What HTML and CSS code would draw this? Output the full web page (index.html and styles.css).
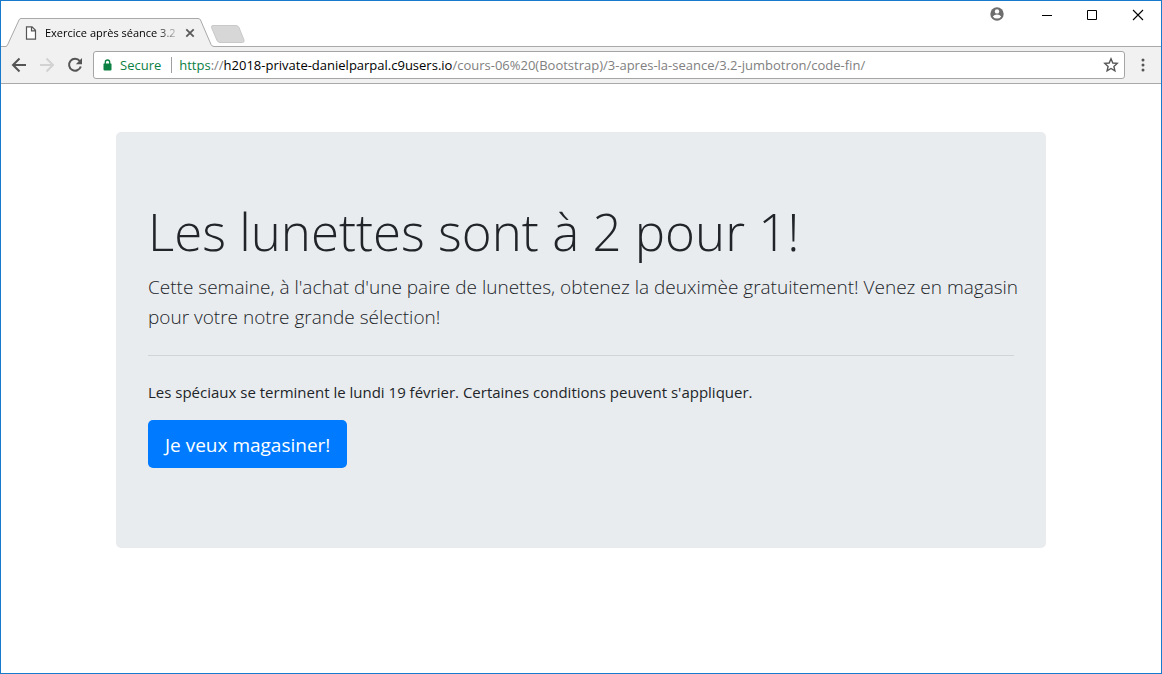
FILE: index.html
```html
<!DOCTYPE html>
<html lang="fr">
<head>
<meta charset="utf-8">
<meta name="viewport" content="width=device-width, initial-scale=1">
<title>Exercice après séance 3.2</title>
<link rel="stylesheet" href="styles.css">
</head>
<body>
<div class="window">
  <header class="titlebar">
    <div class="tabs">
      <div class="tab">
        <svg class="tab-shape" viewBox="0 0 208 29" width="208" height="29" aria-hidden="true"><path d="M0 28.500 Q1 28 1.500 27 L13 2 Q13.500 .5 15 .5 H192 Q194 .5 194.500 2 L205 26.500 Q206 28.500 208 28.500 V29 H0Z" fill="#f1f1f1"/><path d="M0 28.500 Q1 28 1.500 27 L13 2 Q13.500 .5 15 .5 H192 Q194 .5 194.500 2 L205 26.500 Q206 28.500 208 28.500" fill="none" stroke="#a9a9a9"/></svg>
        <svg class="tab-icon" viewBox="0 0 12 14" width="12" height="14" aria-hidden="true"><path d="M1.500 .8H7L10.500 4.300V13.200H1.500ZM6.500 1V4.800H10.300" fill="#fff" stroke="#555" stroke-width="1.200"/></svg>
        <span class="tab-title">Exercice après séance 3.2</span>
        <button class="tab-close" aria-label="Fermer l'onglet"><svg viewBox="0 0 10 10" width="10" height="10"><path d="M1.300 1.300L8.700 8.700M8.700 1.300L1.300 8.700" stroke="#5a5a5a" stroke-width="1.800"/></svg></button>
      </div>
      <button class="new-tab" aria-label="Nouvel onglet"><svg viewBox="0 0 36 18" width="36" height="18"><path d="M3 .5H26Q28 .5 29 2.500L34 15Q34.500 17.500 32.500 17.500H10Q8 17.500 7 15.500L1.500 2.500Q1 .5 3 .5Z" fill="#d7d7d7" stroke="#c9c9c9"/></svg></button>
    </div>
    <div class="controls">
      <button class="control profile" aria-label="Profil"><svg viewBox="0 0 14 14" width="14" height="14"><circle cx="7" cy="7" r="6.700" fill="#6e6e6e"/><circle cx="7" cy="4.400" r="2.200" fill="#fff"/><path d="M2.800 9.400Q4.400 7.600 7 7.600T11.200 9.400Q9.600 11.600 7 11.600T2.800 9.400Z" fill="#fff"/></svg></button>
      <button class="control" aria-label="Réduire"><svg viewBox="0 0 12 12" width="12" height="12"><path d="M2 6.500H12" stroke="#000"/></svg></button>
      <button class="control" aria-label="Agrandir"><svg viewBox="0 0 12 12" width="12" height="12"><path d="M1.500 1.500H10.500V10.500H1.500Z" fill="none" stroke="#000"/></svg></button>
      <button class="control" aria-label="Fermer"><svg viewBox="0 0 12 12" width="12" height="12"><path d="M1 1L11 11M11 1L1 11" stroke="#000" stroke-width="1.100"/></svg></button>
    </div>
  </header>
  <nav class="toolbar" aria-label="Navigation">
    <button class="tool" aria-label="Précédent"><svg viewBox="0 0 16 16" width="16" height="16"><path d="M15 8H2.500M8.500 1.500L2 8L8.500 14.500" fill="none" stroke="#555" stroke-width="2"/></svg></button>
    <button class="tool" aria-label="Suivant" disabled><svg viewBox="0 0 16 16" width="16" height="16"><path d="M1 8H13.500M7.500 1.500L14 8L7.500 14.500" fill="none" stroke="#d2d2d2" stroke-width="2"/></svg></button>
    <button class="tool" aria-label="Actualiser"><svg viewBox="0 0 16 16" width="16" height="16"><path d="M12.800 4A6 6 0 1 0 13.800 9.500" fill="none" stroke="#555" stroke-width="2"/><path d="M15 1V7.200H8.800Z" fill="#555"/></svg></button>
    <div class="omnibox">
      <svg viewBox="0 0 10 12" width="10" height="12" aria-hidden="true"><path d="M1 4.500H8Q8.500 4.500 8.500 5V10.500Q8.500 11.500 7.500 11.500H1.500Q.5 11.500 .5 10.500V5Q.5 4.500 1 4.500Z" fill="#0b8043"/><path d="M2.300 5V3.200Q2.300 1 4.500 1T6.700 3.200V5" fill="none" stroke="#0b8043" stroke-width="1.300"/></svg>
      <span class="secure">Secure</span>
      <div class="url" role="textbox" aria-label="Adresse" contenteditable="true" spellcheck="false"><span class="scheme">https</span>://<span class="host">h2018-private-danielparpal.c9users.io</span>/cours-06%20(Bootstrap)/3-apres-la-seance/3.2-jumbotron/code-fin/</div>
      <button class="star" aria-label="Ajouter aux favoris"><svg viewBox="0 0 16 16" width="16" height="16"><path d="M8 1.800L9.800 6L14.200 6.400L10.900 9.400L11.900 13.800L8 11.500L4.100 13.800L5.100 9.400L1.800 6.400L6.200 6Z" fill="none" stroke="#555" stroke-width="1.400"/></svg></button>
    </div>
    <button class="tool menu" aria-label="Menu"><svg viewBox="0 0 4 14" width="4" height="14"><circle cx="2" cy="2" r="1.500" fill="#555"/><circle cx="2" cy="7" r="1.500" fill="#555"/><circle cx="2" cy="12" r="1.500" fill="#555"/></svg></button>
  </nav>
  <main class="page">
    <section class="jumbotron">
      <h1 class="display">Les lunettes sont à 2 pour 1!</h1>
      <p class="lead">Cette semaine, à l'achat d'une paire de lunettes, obtenez la deuximèe gratuitement! Venez en magasin pour votre notre grande sélection!</p>
      <hr class="rule">
      <p class="note">Les spéciaux se terminent le lundi 19 février. Certaines conditions peuvent s'appliquer.</p>
      <p class="action"><a class="btn" href="#">Je veux magasiner!</a></p>
    </section>
  </main>
</div>
</body>
</html>
```

FILE: styles.css
```css
* { box-sizing: border-box; }

body {
  margin: 0;
  background: #fff;
  color: #212529;
  font-family: "Open Sans", "Noto Sans", sans-serif;
  font-size: 15px;
}

button {
  padding: 0;
  border: 0;
  background: none;
  font: inherit;
}

svg { display: block; }

.window {
  min-height: 100vh;
  border: 1px solid #1979ca;
}

.titlebar {
  display: flex;
  justify-content: space-between;
  height: 46px;
  border-bottom: 1px solid #a9a9a9;
}

.tabs {
  display: flex;
  align-items: flex-end;
  padding-left: 5px;
}

.tab {
  position: relative;
  display: flex;
  align-items: center;
  width: 208px;
  height: 29px;
  margin-bottom: -1px;
  padding: 0 19px;
}

.tab-shape {
  position: absolute;
  inset: 0;
}

.tab-icon, .tab-title, .tab-close { position: relative; }

.tab-title {
  flex: 1;
  margin-left: 8px;
  margin-right: 4px;
  overflow: hidden;
  white-space: nowrap;
  font-size: 11px;
  line-height: 16px;
  color: #000;
  -webkit-mask-image: linear-gradient(to left, transparent, #000 24px);
  mask-image: linear-gradient(to left, transparent, #000 24px);
}

.new-tab {
  margin: 0 0 3px -4px;
}

.controls {
  display: flex;
  align-items: flex-start;
}

.control {
  display: grid;
  place-items: center;
  width: 46px;
  height: 28px;
}

.profile {
  width: 52px;
  height: 26px;
}

.toolbar {
  display: flex;
  align-items: center;
  height: 37px;
  background: #f1f1f1;
  border-bottom: 1px solid #a9a9a9;
  padding: 0 6px 0 4px;
}

.tool {
  display: grid;
  place-items: center;
  width: 28px;
  height: 28px;
}

.menu { width: 24px; }

.omnibox {
  flex: 1;
  min-width: 0;
  display: flex;
  align-items: center;
  height: 28px;
  margin: 0 6px 0 4px;
  padding: 0 5px 0 9px;
  border: 1px solid #a5a5a5;
  border-radius: 3px;
  background: #fff;
  font-size: 13px;
  line-height: 16px;
}

.secure {
  margin-left: 7px;
  padding-right: 10px;
  border-right: 1px solid #a0a0a0;
  color: #0b8043;
}

.url {
  flex: 1;
  min-width: 0;
  margin-left: 7px;
  overflow: hidden;
  white-space: nowrap;
  color: #808080;
}

.scheme { color: #0b8043; }

.host { color: #000; }

.page {
  padding: 48px 115px;
}

.jumbotron {
  padding: 66px 32px 64px;
  border-radius: 5px;
  background: #e9ecef;
}

.display {
  margin: 0 0 7px;
  font-size: 51px;
  font-weight: 300;
  line-height: 67px;
}

/* The lead may run slightly past the rule before it wraps. */
.lead {
  margin: 0 -8px 0 0;
  font-size: 19px;
  font-weight: 300;
  line-height: 30px;
}

.rule {
  margin: 23px 0 24px;
  border: 0;
  border-top: 1px solid #d2d5d7;
}

.note {
  margin: 0 0 16px;
  line-height: 24px;
}

.action { margin: 0 0 16px; }

.btn {
  display: inline-block;
  padding: 10px 17px 8px;
  border-radius: 5px;
  background: #007bff;
  color: #fff;
  font-size: 19px;
  line-height: 30px;
  text-decoration: none;
  vertical-align: top;
}
```
